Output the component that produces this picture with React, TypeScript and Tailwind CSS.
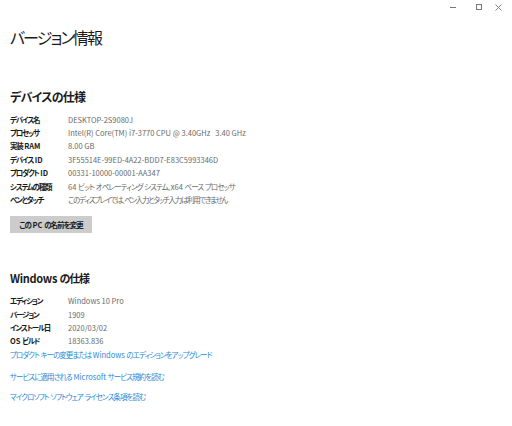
import React from "react";

const device: [string, string, string][] = [
  ["デバイス名", "DESKTOP-2S9080J", "tracking-[-0.9px]"],
  ["プロセッサ", "Intel(R) Core(TM) i7-3770 CPU @ 3.40GHz   3.40 GHz", "tracking-[-0.9px]"],
  ["実装 RAM", "8.00 GB", "tracking-[-0.9px]"],
  ["デバイス ID", "3F55514E-99ED-4A22-BDD7-E83C5993346D", "tracking-[-0.9px]"],
  ["プロダクト ID", "00331-10000-00001-AA347", "tracking-[-0.9px]"],
  ["システムの種類", "64 ビット オペレーティング システム、x64 ベース プロセッサ", "tracking-[-0.9px]"],
  ["ペンとタッチ", "このディスプレイでは、ペン入力とタッチ入力は利用できません", "tracking-[-1.35px]"],
];

const win: [string, string, string][] = [
  ["エディション", "Windows 10 Pro", "tracking-[-0.9px]"],
  ["バージョン", "1909", "tracking-[-0.9px]"],
  ["インストール日", "2020/03/02", "tracking-[-0.9px]"],
  ["OS ビルド", "18363.836", "tracking-[-0.9px]"],
];

const CJK = /([\u3000-\u30ff\u4e00-\u9fff\uff00-\uffef]+)/;

function J({ t, cjk }: { t: string; cjk: string }) {
  const parts = t.split(CJK);
  return (
    <>
      {parts.map((p, i) =>
        i % 2 === 1 ? (
          <span key={i} className={cjk}>
            {p}
          </span>
        ) : (
          <span key={i}>{p}</span>
        )
      )}
    </>
  );
}

function Row({ k, v, c }: { k: string; v: string; c: string }) {
  return (
    <div className="flex h-[13.4px] items-center text-[7.5px] leading-[13.4px]">
      <div className="w-[58px] shrink-0 whitespace-pre font-semibold text-[#1b1b1b]">
        <J t={k} cjk="tracking-[-1.25px]" />
      </div>
      <div className="whitespace-pre text-[#6a6a6a]">
        <J t={v} cjk={c} />
      </div>
    </div>
  );
}

function Link({ t, cls }: { t: string; cls: string }) {
  return (
    <div className={cls + " h-[13.4px] whitespace-pre text-[7.5px] leading-[13.4px] text-[#2b88d8]"}>
      <J t={t} cjk="tracking-[-0.95px]" />
    </div>
  );
}

export default function App() {
  return (
    <div
      className="w-[512px] h-[426px] overflow-hidden bg-white text-[#1b1b1b] [font-feature-settings:'palt']"
      style={{ fontFamily: '"Noto Sans CJK JP", "Noto Sans", sans-serif' }}
    >
      <div className="flex h-[14px] items-center justify-end">
        <div className="flex w-[26px] justify-center">
          <div className="h-px w-[6px] bg-[#777]" />
        </div>
        <div className="flex w-[26px] justify-center">
          <div className="h-[6px] w-[6px] border border-[#777]" />
        </div>
        <div className="flex w-[20px] justify-start pl-[3px]">
          <svg width="7" height="7" viewBox="0 0 7 7">
            <path d="M0.5 0.5 L6.5 6.5 M6.5 0.5 L0.5 6.5" stroke="#777" strokeWidth="0.9" />
          </svg>
        </div>
      </div>
      <div className="pl-[10px]">
        <div className="mt-[15px] h-[17px] text-[16px] leading-[17px] font-normal tracking-[-1.9px] text-[#1b1b1b]">
          バージョン情報
        </div>
        <div className="mt-[45px] h-[12px] text-[12px] leading-[12px] font-semibold tracking-[-0.8px]">
          デバイスの仕様
        </div>
        <div className="mt-[9.6px]">
          {device.map(([k, v, c]) => (
            <Row key={k} k={k} v={v} c={c} />
          ))}
        </div>
        <div className="mt-[9.6px] flex h-[17px] w-[82px] items-center justify-center whitespace-pre bg-[#cccccc] text-[7.5px] font-semibold text-[#1b1b1b]">
          <J t="この PC の名前を変更" cjk="tracking-[-1px]" />
        </div>
        <div className="mt-[39.5px] h-[12px] whitespace-pre text-[11px] leading-[12px] font-semibold tracking-[-0.3px]">
          <J t="Windows の仕様" cjk="tracking-[-1.1px]" />
        </div>
        <div className="mt-[9.8px]">
          {win.map(([k, v, c]) => (
            <Row key={k} k={k} v={v} c={c} />
          ))}
          <Link cls="" t="プロダクト キーの変更または Windows のエディションをアップグレード" />
          <Link cls="mt-[8.7px]" t="サービスに適用される Microsoft サービス規約を読む" />
          <Link cls="mt-[6.6px]" t="マイクロソフト ソフトウェア ライセンス条項を読む" />
        </div>
      </div>
    </div>
  );
}
